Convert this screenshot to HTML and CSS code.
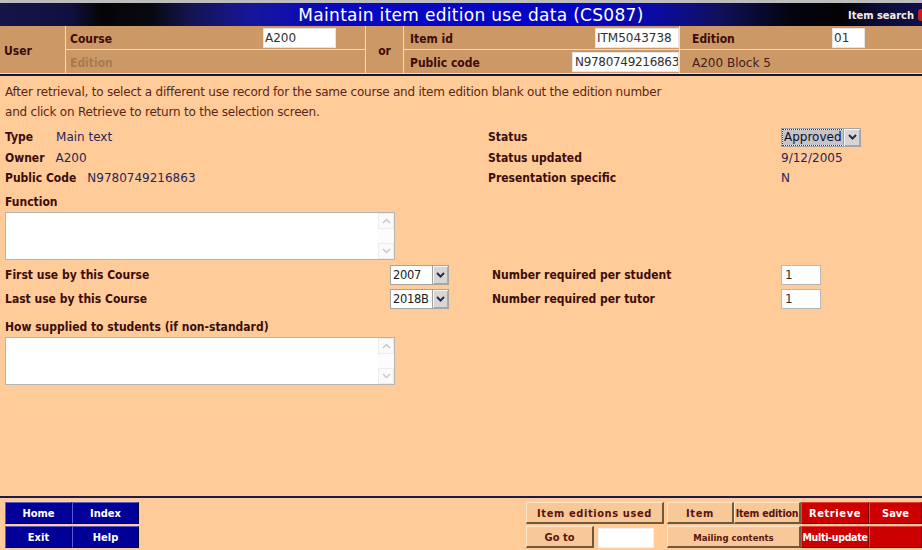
FILE: index.html
```html
<!DOCTYPE html>
<html>
<head>
<meta charset="utf-8">
<title>Maintain item edition use data (CS087)</title>
<link rel="stylesheet" href="styles.css">
</head>
<body>
<div class="topline"></div>
<div class="titlebar">
  <div></div>
  <div class="title">Maintain item edition use data (CS087)</div>
  <div class="search">Item search<span class="search-dot"></span></div>
</div>

<div class="hdr">
  <div class="c user">User</div>
  <div class="c course">Course<input class="in in-course" value="A200"></div>
  <div class="c or">or</div>
  <div class="c item">Item id<input class="in in-item" value="ITM5043738"></div>
  <div class="c ed">Edition<input class="in in-ed" value="01"></div>
  <div class="c course dis">Edition</div>
  <div class="c item">Public code<input class="in in-pub" value="N9780749216863"></div>
  <div class="c ed val">A200 Block 5</div>
</div>
<div class="hdr-line"></div>

<main class="main">
  <p class="note">After retrieval, to select a different use record for the same course and item edition blank out the edition number<br>and click on Retrieve to return to the selection screen.</p>

  <div class="info">
    <div><span class="lbl">Type</span><span class="v v-type">Main text</span></div>
    <div class="lbl">Status</div>
    <div class="status-cell">
      <span class="sel sel-status"><span class="sel-val"><span class="hl">Approved</span></span><span class="sel-btn"><svg width="9" height="6" viewBox="0 0 9 6"><polyline points="1,1 4.5,4.5 8,1" fill="none" stroke="#2a2a50" stroke-width="2"/></svg></span></span>
    </div>
    <div><span class="lbl">Owner</span><span class="v">A200</span></div>
    <div class="lbl">Status updated</div>
    <div class="v0">9/12/2005</div>
    <div><span class="lbl">Public Code</span><span class="v">N9780749216863</span></div>
    <div class="lbl">Presentation specific</div>
    <div class="v0">N</div>
  </div>

  <div class="lbl block-lbl">Function</div>
  <div class="ta"><div class="ta-body"></div><div class="ta-sb"><span class="sb-btn"><svg width="9" height="6" viewBox="0 0 9 6"><polyline points="1,5 4.5,1.5 8,5" fill="none" stroke="#c8c8c8" stroke-width="1.5"/></svg></span><span class="sb-btn"><svg width="9" height="6" viewBox="0 0 9 6"><polyline points="1,1 4.5,4.5 8,1" fill="none" stroke="#c8c8c8" stroke-width="1.5"/></svg></span></div></div>

  <div class="uses">
    <div class="lbl">First use by this Course</div>
    <div><span class="sel sel-year"><span class="sel-val">2007</span><span class="sel-btn"><svg width="9" height="6" viewBox="0 0 9 6"><polyline points="1,1 4.5,4.5 8,1" fill="none" stroke="#2a2a50" stroke-width="2"/></svg></span></span></div>
    <div class="lbl">Number required per student</div>
    <div><input class="in in-num" value="1"></div>
    <div class="lbl">Last use by this Course</div>
    <div><span class="sel sel-year"><span class="sel-val">2018B</span><span class="sel-btn"><svg width="9" height="6" viewBox="0 0 9 6"><polyline points="1,1 4.5,4.5 8,1" fill="none" stroke="#2a2a50" stroke-width="2"/></svg></span></span></div>
    <div class="lbl">Number required per tutor</div>
    <div><input class="in in-num" value="1"></div>
  </div>

  <div class="lbl block-lbl lbl-how">How supplied to students (if non-standard)</div>
  <div class="ta"><div class="ta-body"></div><div class="ta-sb"><span class="sb-btn"><svg width="9" height="6" viewBox="0 0 9 6"><polyline points="1,5 4.5,1.5 8,5" fill="none" stroke="#c8c8c8" stroke-width="1.5"/></svg></span><span class="sb-btn"><svg width="9" height="6" viewBox="0 0 9 6"><polyline points="1,1 4.5,4.5 8,1" fill="none" stroke="#c8c8c8" stroke-width="1.5"/></svg></span></div></div>
</main>

<footer class="footer">
  <div class="nav">
    <span class="btn blue">Home</span>
    <span class="btn blue">Index</span>
    <span class="btn blue">Exit</span>
    <span class="btn blue">Help</span>
  </div>
  <div class="acts">
    <span class="btn beige b-used">Item editions used</span>
    <span class="btn beige b-item">Item</span>
    <span class="btn beige b-itemed">Item edition</span>
    <span class="btn red b-retr">Retrieve</span>
    <span class="btn red b-save">Save</span>
    <span class="btn beige b-goto">Go to</span>
    <span class="goto-box"><input class="in in-goto" value=""></span>
    <span class="btn beige b-mail">Mailing contents</span>
    <span class="btn red b-multi">Multi-update</span>
    <span class="btn red b-blank"></span>
  </div>
</footer>
</body>
</html>
```
FILE: styles.css
```css
* { box-sizing: border-box; }

body {
  margin: 0;
  width: 922px;
  height: 550px;
  overflow: hidden;
  background: #ffcc99;
  font-family: "DejaVu Sans", Verdana, sans-serif;
  font-size: 12px;
  display: flex;
  flex-direction: column;
}

.topline { height: 3px; background: #bdbdbd; flex: none; }

.titlebar {
  flex: none;
  height: 23px;
  display: grid;
  grid-template-columns: 1fr auto 1fr;
  align-items: center;
  color: #fff;
  background: linear-gradient(to right,
    #141448 0, #101040 70px, #050508 100px, #080810 150px, #141450 190px,
    #16169a 250px, #0808c0 330px, #0404c8 560px, #0a0aa8 650px,
    #10105a 720px, #040410 790px, #030306 840px, #0c0c3a 880px, #101048 922px);
}
.title {
  font-size: 17px;
  padding: 1px 0 0 20px;
  white-space: nowrap;
  letter-spacing: 0.3px;
}
.search {
  justify-self: end;
  display: flex;
  align-items: center;
  gap: 4px;
  font-family: "DejaVu Sans Condensed", "DejaVu Sans", sans-serif;
  font-weight: bold;
  font-size: 11px;
  color: #f4eee4;
  padding-top: 1px;
}
.search-dot { width: 4px; height: 12px; background: #c02020; border-radius: 3px 0 0 3px; }

/* header table */
.hdr {
  flex: none;
  display: grid;
  grid-template-columns: 65px 299px 37px 275px 1fr;
  grid-template-rows: 23px 23px;
  gap: 1px;
  background: #f1dcc6;
  padding-bottom: 1px;
}
.hdr .c {
  background: #cc9966;
  display: flex;
  align-items: center;
  padding-top: 2px;
  font-family: "DejaVu Sans Condensed", "DejaVu Sans", sans-serif;
  font-weight: bold;
  font-size: 12px;
  color: #3c0c0a;
}
.hdr .user { grid-row: 1 / span 2; padding-left: 4px; padding-top: 3px; }
.hdr .or { grid-row: 1 / span 2; grid-column: 3; justify-content: center; padding-top: 3px; }
.hdr .course { padding-left: 4px; }
.hdr .item { padding-left: 6px; }
.hdr .ed { padding-left: 12px; }
.hdr .dis { color: #a87a4e; }
.hdr .val {
  font-family: "DejaVu Sans", Verdana, sans-serif;
  font-weight: normal;
  color: #402020;
}
.hdr-line { flex: none; height: 2px; background: #161636; }

.in {
  height: 20px;
  border: 1px solid #e4e4e4;
  background: #fff;
  font-family: "DejaVu Sans", Verdana, sans-serif;
  font-size: 12px;
  color: #303030;
  padding: 0 1px;
  margin: 0;
  outline: none;
}
.hdr .in { margin-top: -2px; }
.in-course { width: 73px; margin-left: auto; margin-right: 29px; }
.in-item { width: 84px; margin-left: auto; }
.in-pub { width: 107px; margin-left: auto; padding: 0 0 0 2px; letter-spacing: -0.3px; }
.in-ed { width: 33px; margin-left: auto; margin-right: 57px; }
.in-num { width: 40px; border-color: #b8b8b8; padding-left: 3px; }

/* main */
.main { flex: 1; padding: 6px 0 0 5px; }
.note { margin: 0; line-height: 20px; color: #5c2616; letter-spacing: -0.22px; }

.lbl {
  font-family: "DejaVu Sans Condensed", "DejaVu Sans", sans-serif;
  font-weight: bold;
  font-size: 12px;
  color: #3c0c0a;
}
.v { color: #2c1f5a; margin-left: 11px; }
.v-type { margin-left: 23px; }
.v0 { color: #2c1f5a; }

.info {
  margin-top: 5px;
  display: grid;
  grid-template-columns: 483px 293px 1fr;
  grid-auto-rows: 20.5px;
  align-items: center;
}
.status-cell { display: flex; align-items: center; }

.sel {
  display: inline-flex;
  height: 20px;
  border: 1px solid #a4a4a4;
  background: #fff;
  vertical-align: middle;
}
.sel-val {
  flex: 1;
  display: flex;
  align-items: center;
  padding-left: 2px;
  color: #202020;
  font-family: "DejaVu Sans", Verdana, sans-serif;
  font-size: 11.5px;
  letter-spacing: -0.3px;
  overflow: hidden;
}
.sel-btn {
  width: 17px;
  flex: none;
  display: flex;
  align-items: center;
  justify-content: center;
  background: #d6d6d6;
  border-left: 1px solid #a0a0a0;
  box-shadow: inset 1px 1px 0 #f4f4f4, inset -1px -1px 0 #a8a8a8;
}
.sel-status { width: 80px; height: 19px; }
.sel-status .sel-val { padding-left: 1px; font-size: 12px; letter-spacing: 0; }
.hl {
  background: #c4c4cc;
  outline: 1px dotted #333;
  padding: 0 1px;
  line-height: 15px;
  color: #101020;
}
.sel-year { width: 59px; }
.sel-year .sel-btn { width: 16px; }

.block-lbl { margin-top: 3px; line-height: 20px; }
.lbl-how { margin-top: 6px; }

.ta {
  width: 390px;
  height: 48px;
  border: 1px solid #b4b4b4;
  background: #fff;
  display: flex;
}
.ta-body { flex: 1; }
.ta-sb {
  width: 16px;
  display: flex;
  flex-direction: column;
  justify-content: space-between;
  background: #fcfcfc;
}
.sb-btn {
  height: 16px;
  display: flex;
  align-items: center;
  justify-content: center;
  border: 1px solid #ececec;
  background: #fafafa;
}

.uses {
  margin-top: 3px;
  display: grid;
  grid-template-columns: 385px 102px 289px 1fr;
  grid-auto-rows: 24px;
  align-items: center;
}

/* footer */
.footer {
  flex: none;
  height: 54px;
  border-top: 2px solid #1c1c4c;
  padding-top: 4px;
  display: flex;
  justify-content: space-between;
}
.btn {
  display: flex;
  align-items: center;
  justify-content: center;
  height: 22px;
  font-family: "DejaVu Sans Condensed", "DejaVu Sans", sans-serif;
  font-weight: bold;
  font-size: 11px;
  white-space: nowrap;
  overflow: hidden;
}
.nav {
  margin-left: 5px;
  display: grid;
  grid-template-columns: 67px 67px;
  grid-template-rows: 22px 22px;
  gap: 2px 0;
}
.blue {
  background: #000099;
  color: #fff;
  border: 1px solid;
  border-color: #5a5ad0 #000040 #000040 #5a5ad0;
}
.acts {
  display: grid;
  grid-template-columns: 68px 70px 3px 67px 67px 68px 53px;
  grid-template-rows: 22px 22px;
  gap: 2px 0;
}
.beige {
  background: #f8c898;
  color: #5a1410;
  border: 1px solid;
  border-color: #fde6cc #6e5a3a #6e5a3a #fde6cc;
  border-width: 1px 2px 2px 1px;
  padding-top: 1px;
}
.red {
  background: #cc0000;
  color: #fff;
  border: 1px solid;
  border-color: #e84040 #7a0000 #7a0000 #e84040;
}
.b-used { grid-column: 1 / span 2; grid-row: 1; letter-spacing: 0.6px; }
.b-item { grid-column: 4; grid-row: 1; letter-spacing: 0.6px; }
.b-itemed { grid-column: 5; grid-row: 1; font-size: 10.5px; letter-spacing: -0.2px; }
.b-retr { grid-column: 6; grid-row: 1; letter-spacing: 0.6px; }
.b-save { grid-column: 7; grid-row: 1; }
.b-goto { grid-column: 1; grid-row: 2; }
.goto-box { grid-column: 2; grid-row: 2; padding: 2px 0 0 4px; }
.in-goto { width: 56px; height: 20px; border-color: #f0f0f0; }
.b-mail { grid-column: 4 / span 2; grid-row: 2; font-size: 9.5px; }
.b-multi { grid-column: 6; grid-row: 2; font-size: 10.5px; letter-spacing: -0.3px; }
.b-blank { grid-column: 7; grid-row: 2; }
```
